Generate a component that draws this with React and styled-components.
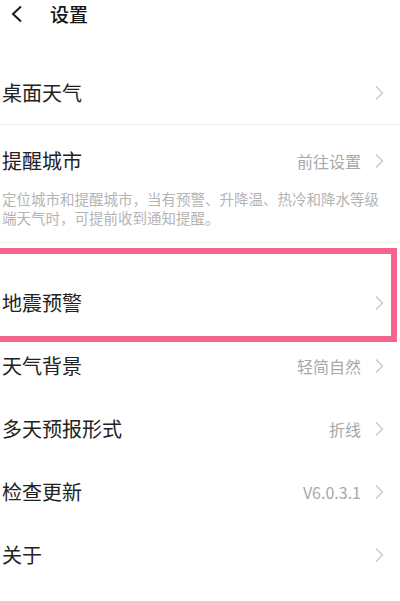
import styled, { createGlobalStyle } from 'styled-components';

const GlobalStyle = createGlobalStyle`
body {
  margin: 0;
  background: #fff;
  font-family: "Noto Sans CJK SC", "Noto Sans", sans-serif;
}
`;

const Page = styled('div')`
width: 400px;
height: 601px;
overflow: hidden;
background: #fff;
`;

const Header = styled('div')`
display: flex;
align-items: center;
height: 27px;
padding-left: 10px;
`;

const BackButton = styled('div')`
display: flex;
align-items: center;
width: 40px;
`;

const HeaderTitle = styled('div')`
font-size: 19px;
font-weight: 500;
color: #151515;
line-height: 27px;
`;

const List = styled('div')`
margin-top: 35px;
`;

const Row = styled('div')`
position: relative;
display: flex;
align-items: center;
justify-content: space-between;
height: ${(p) => p.$height || 63}px;
padding: 0 16px 0 2px;
`;

const RowTitle = styled('div')`
font-size: 20px;
color: #222;
line-height: 28px;
`;

const RowRight = styled('div')`
display: flex;
align-items: center;
gap: 13px;
`;

const RowValue = styled('div')`
font-size: 16px;
color: #a8a8a8;
line-height: 22px;
`;

const Divider = styled('div')`
height: 1px;
background: #f0f0f0;
`;

const Section = styled('div')`
padding: 8px 0 15px;
`;

const Description = styled('div')`
padding: 0 16px 0 2px;
font-size: 14.5px;
line-height: 19px;
color: #b4b4b4;
`;

const Group = styled('div')`
margin-top: 28px;
`;

const Highlight = styled('div')`
position: absolute;
top: -23px;
bottom: -8px;
left: -10px;
right: 3px;
border: 6px solid #f2658f;
pointer-events: none;
`;

function Chevron() {
  return (
    <svg width="10" height="16" viewBox="0 0 10 16">
      <polyline points="2,1.5 8.5,8 2,14.5" fill="none" stroke="#c9c9c9" strokeWidth="1.4" />
    </svg>
  );
}

function BackIcon() {
  return (
    <svg width="14" height="18" viewBox="0 0 14 18">
      <polyline points="11,1.5 3,9 11,16.5" fill="none" stroke="#1a1a1a" strokeWidth="2" />
    </svg>
  );
}

function SettingRow({ title, value, highlighted }) {
  return (
    <Row>
      <RowTitle>{title}</RowTitle>
      <RowRight>
        {value && <RowValue>{value}</RowValue>}
        <Chevron />
      </RowRight>
      {highlighted && <Highlight />}
    </Row>
  );
}

function App() {
  const rows = [
    { title: '地震预警', highlighted: true },
    { title: '天气背景', value: '轻简自然' },
    { title: '多天预报形式', value: '折线' },
    { title: '检查更新', value: 'V6.0.3.1' },
    { title: '关于' },
  ];

  return (
    <Page>
      <GlobalStyle />
      <Header>
        <BackButton><BackIcon /></BackButton>
        <HeaderTitle>设置</HeaderTitle>
      </Header>
      <List>
        <Row $height={62}>
          <RowTitle>桌面天气</RowTitle>
          <Chevron />
        </Row>
        <Divider />
        <Section>
          <Row $height={56}>
            <RowTitle>提醒城市</RowTitle>
            <RowRight>
              <RowValue>前往设置</RowValue>
              <Chevron />
            </RowRight>
          </Row>
          <Description>
            定位城市和提醒城市，当有预警、升降温、热冷和降水等级<br />
            端天气时，可提前收到通知提醒。
          </Description>
        </Section>
        <Divider />
        <Group>
          {rows.map((row, index) =>
            <SettingRow key={index} title={row.title} value={row.value} highlighted={row.highlighted} />
          )}
        </Group>
      </List>
    </Page>
  );
}

export default App;
